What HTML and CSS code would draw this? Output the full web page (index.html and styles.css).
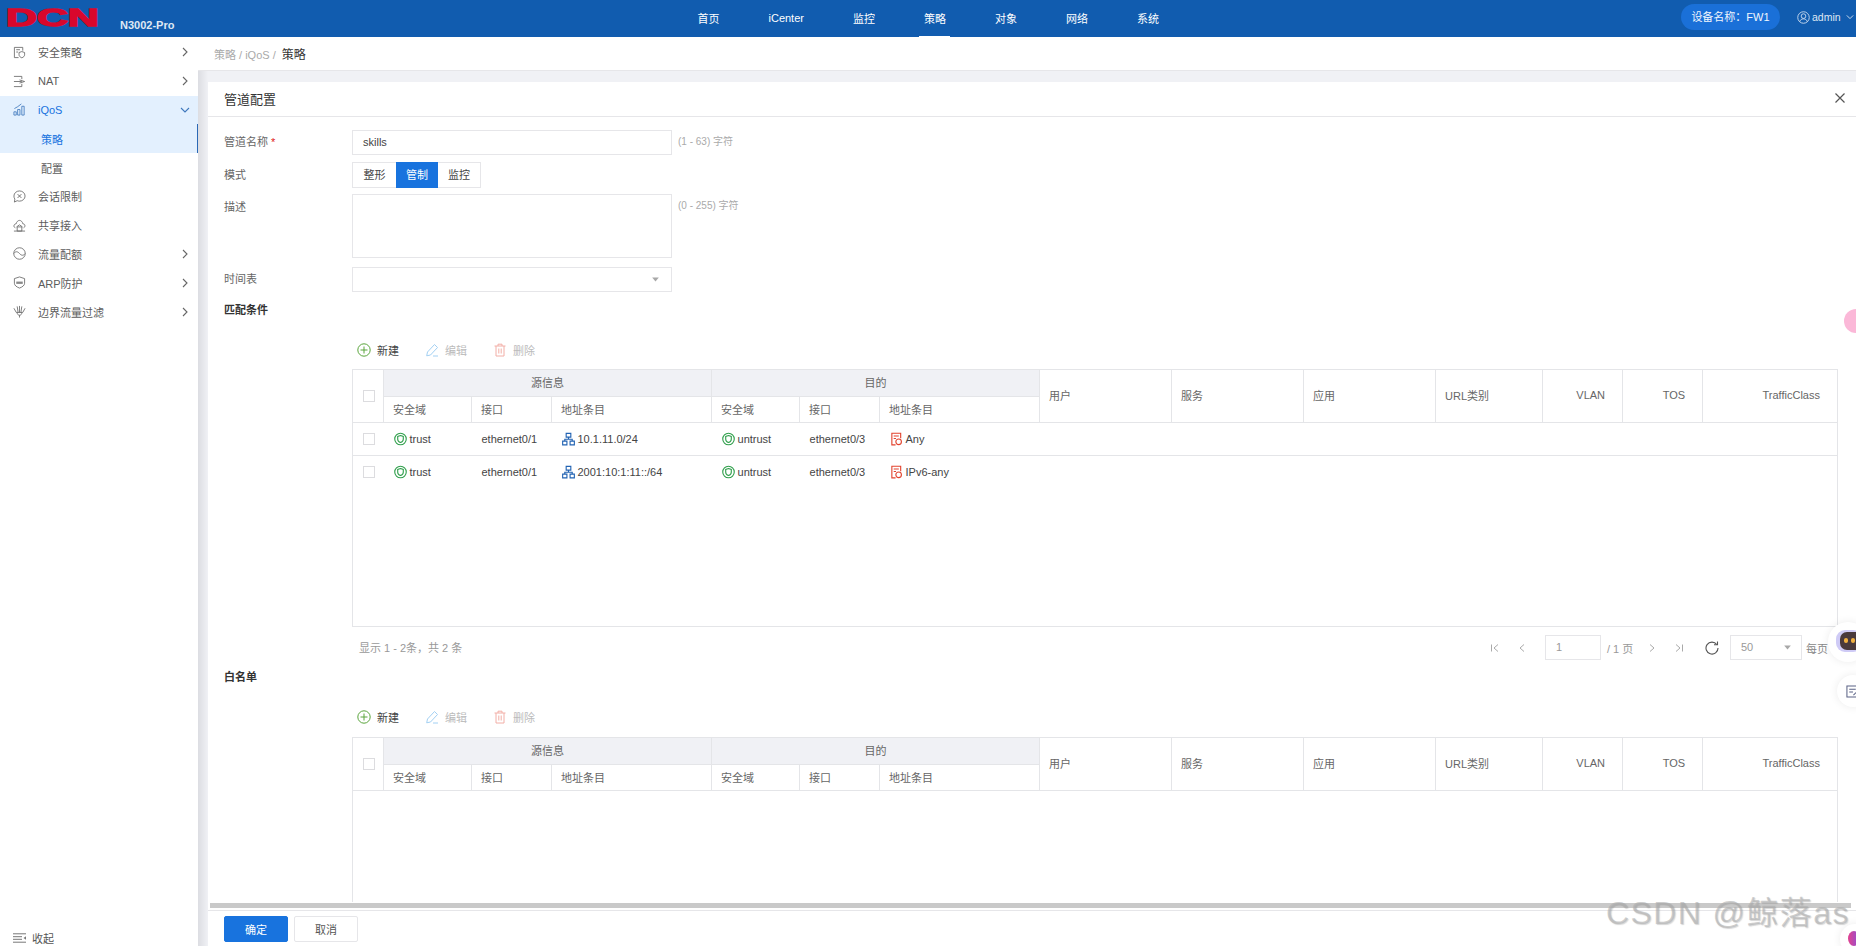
FILE: index.html
```html
<!DOCTYPE html>
<html lang="zh">
<head>
<meta charset="utf-8">
<title>管道配置</title>
<link rel="stylesheet" href="styles.css">
</head>
<body>
<svg class="defs" width="0" height="0">
  <symbol id="i-chev-r" viewBox="0 0 10 10"><path d="M3 1l4 4-4 4" fill="none" stroke="currentColor" stroke-width="1.1"/></symbol>
  <symbol id="i-chev-d" viewBox="0 0 10 10"><path d="M1 3l4 4 4-4" fill="none" stroke="currentColor" stroke-width="1.1"/></symbol>
  <symbol id="i-zone" viewBox="0 0 14 14"><circle cx="7" cy="7" r="6.200" fill="none" stroke="#2f9f4b" stroke-width="1.200"/><path d="M7 3.200l3 1.100v2.900c0 1.800-1.400 3-3 3.600-1.600-.6-3-1.800-3-3.600V4.300z" fill="none" stroke="#2f9f4b" stroke-width="1.200"/></symbol>
  <symbol id="i-net" viewBox="0 0 14 14"><path d="M4.500 1h5v4h-5zM.7 9.300h4.600v4H.7zM8.700 9.300h4.600v4H8.700zM7 5v2.200M3 9.300V7.200h8v2.100" fill="none" stroke="#2263b3" stroke-width="1.200"/></symbol>
  <symbol id="i-addr" viewBox="0 0 14 14"><path d="M6 13.300H2V.8h9.500v5.500M4 3.800h5.500M4 6.500h2.500" fill="none" stroke="#e2432e" stroke-width="1.200"/><circle cx="9.300" cy="10" r="3" fill="none" stroke="#e2432e" stroke-width="1.200"/></symbol>
  <symbol id="i-add" viewBox="0 0 14 14"><circle cx="7" cy="7" r="6.200" fill="none" stroke="#5aa53c" stroke-width="1"/><path d="M7 3.500v7M3.500 7h7" stroke="#5aa53c" stroke-width="1"/></symbol>
  <symbol id="i-edit" viewBox="0 0 14 14"><path d="M9.500 1.500l3 3-7 7.500-3.800.8.800-3.800zM8 13h5" fill="none" stroke="#a2d0f3" stroke-width="1"/></symbol>
  <symbol id="i-del" viewBox="0 0 14 14"><path d="M1.500 3h11M5 3V1.200h4V3M3 3v10h8V3M5.800 5.500v5M8.200 5.500v5" fill="none" stroke="#f2aea6" stroke-width="1"/></symbol>
  <symbol id="i-caret" viewBox="0 0 8 6"><path d="M0 .5h8L4 5.500z" fill="#a8a8a8"/></symbol>
</svg>

<div class="app">
  <header class="topbar">
    <div class="brand">
      <span class="logo">DCN</span>
      <span class="model">N3002-Pro</span>
    </div>
    <nav class="nav">
      <a class="nav-item">首页</a>
      <a class="nav-item">iCenter</a>
      <a class="nav-item">监控</a>
      <a class="nav-item is-active">策略</a>
      <a class="nav-item">对象</a>
      <a class="nav-item">网络</a>
      <a class="nav-item">系统</a>
    </nav>
    <div class="top-right">
      <span class="device-pill">设备名称：FW1</span>
      <span class="user">
        <svg class="user-icon" viewBox="0 0 14 14"><circle cx="7" cy="7" r="6.200" fill="none" stroke="#dbe6f4" stroke-width=".9"/><circle cx="7" cy="5.500" r="2.500" fill="none" stroke="#dbe6f4" stroke-width=".9"/><path d="M2.800 11.500c.8-2 2.300-3 4.200-3s3.400 1 4.200 3" fill="none" stroke="#dbe6f4" stroke-width=".9"/></svg>
        admin
        <svg class="user-chev"><use href="#i-chev-d"/></svg>
      </span>
    </div>
  </header>

  <div class="workspace">
    <aside class="sidebar">
      <div class="side-row">
        <svg class="side-icon" viewBox="0 0 14 14"><path d="M6 12.500H1.500v-11h9V5M3.500 4h4M3.500 6.500h2M9.500 6l3 1v2.500c0 1.500-1.300 2.600-3 3.200-1.700-.6-3-1.700-3-3.200V7z" fill="none" stroke="#666" stroke-width=".9"/></svg>
        <span class="side-text">安全策略</span><svg class="side-chev"><use href="#i-chev-r"/></svg>
      </div>
      <div class="side-row">
        <svg class="side-icon" viewBox="0 0 14 14"><path d="M1 1.500h8.500v3M1 7h8.500M1 12.500h8.500v-3M7 5.300L12.500 7 7 8.700" fill="none" stroke="#666" stroke-width=".9"/></svg>
        <span class="side-text">NAT</span><svg class="side-chev"><use href="#i-chev-r"/></svg>
      </div>
      <div class="side-row is-open">
        <svg class="side-icon" viewBox="0 0 14 14"><path d="M1 9.500h2.500V13H1zM5 7h2.500v6H5zM9.500 3.500H12V13H9.500zM1.500 6l3.500-2 4-3" fill="none" stroke="#3f78bd" stroke-width=".9"/></svg>
        <span class="side-text">iQoS</span><svg class="side-chev"><use href="#i-chev-d"/></svg>
      </div>
      <div class="side-row side-sub is-current"><span class="side-text">策略</span></div>
      <div class="side-row side-sub"><span class="side-text">配置</span></div>
      <div class="side-row">
        <svg class="side-icon" viewBox="0 0 14 14"><path d="M7 1c3.300 0 6 2.400 6 5.500S10.300 12 7 12c-.9 0-1.800-.2-2.500-.5L1.500 13l.5-3.200C1.400 8.900 1 7.800 1 6.500 1 3.400 3.700 1 7 1z" fill="none" stroke="#666" stroke-width=".9"/><path d="M5 4.500l4 4M9 4.500l-4 4" stroke="#666" stroke-width="1"/></svg>
        <span class="side-text">会话限制</span>
      </div>
      <div class="side-row">
        <svg class="side-icon" viewBox="0 0 14 14"><path d="M2.500 9.500C1.200 9 .7 7.800 1.200 6.600c.4-1 1.300-1.400 2.100-1.300C3.800 3 5.400 1.500 7 1.500s3.200 1.500 3.700 3.800c1-.1 1.900.4 2.100 1.400.2 1.200-.3 2.300-1.300 2.800M1 13h12M4.500 8.500h5V13h-5zM3.800 8.500L7 6.300l3.200 2.200" fill="none" stroke="#666" stroke-width=".9"/></svg>
        <span class="side-text">共享接入</span>
      </div>
      <div class="side-row">
        <svg class="side-icon" viewBox="0 0 14 14"><circle cx="7" cy="7" r="6.200" fill="none" stroke="#666" stroke-width=".9"/><path d="M.8 7c2-2.500 4-2.500 6.200 0s4.200 2.500 6.200 0" fill="none" stroke="#666" stroke-width=".9"/></svg>
        <span class="side-text">流量配额</span><svg class="side-chev"><use href="#i-chev-r"/></svg>
      </div>
      <div class="side-row">
        <svg class="side-icon" viewBox="0 0 14 14"><path d="M7 1l5.500 1.800v5c0 2.300-2.300 4-5.500 5.200-3.200-1.200-5.500-2.900-5.500-5.200v-5z" fill="none" stroke="#666" stroke-width=".9"/><path d="M3.500 6h7v2.500h-7z" fill="#888"/></svg>
        <span class="side-text">ARP防护</span><svg class="side-chev"><use href="#i-chev-r"/></svg>
      </div>
      <div class="side-row">
        <svg class="side-icon" viewBox="0 0 14 14"><path d="M1 3.500l2.500 4.500h7L13 3.500M4.500 1.500L5.500 8M9.500 1.500L8.500 8M7 1v7M4.500 8c0 2 1 3 2.500 3s2.500-1 2.500-3M7 11v2.500" fill="none" stroke="#666" stroke-width=".9"/></svg>
        <span class="side-text">边界流量过滤</span><svg class="side-chev"><use href="#i-chev-r"/></svg>
      </div>
      <div class="collapse">
        <svg class="collapse-icon" viewBox="0 0 13 10"><path d="M0 .800h13M0 3.700h9M0 6.300h9M0 9.200h13" stroke="#777" stroke-width="1"/><path d="M13 3.200v3.600L10.500 5z" fill="#777"/></svg>
        <span>收起</span>
      </div>
    </aside>
    <div class="gutter"></div>

    <main class="main">
      <div class="crumbs"><span class="crumb-dim">策略 / iQoS / </span><span class="crumb-cur">策略</span></div>
      <section class="panel">
        <div class="panel-head">
          <h1 class="panel-title">管道配置</h1>
          <svg class="close" viewBox="0 0 10 10"><path d="M.500.500l9 9M9.500.500l-9 9" stroke="#555" stroke-width="1.200"/></svg>
        </div>
        <div class="panel-body">
          <div class="form-row row-name">
            <label class="form-label">管道名称 <em class="req">*</em></label>
            <div class="field">skills</div>
            <span class="hint">(1 - 63) 字符</span>
          </div>
          <div class="form-row row-mode">
            <label class="form-label">模式</label>
            <div class="seg">
              <span class="seg-item seg-a">整形</span>
              <span class="seg-item seg-b is-on">管制</span>
              <span class="seg-item seg-c">监控</span>
            </div>
          </div>
          <div class="form-row row-desc">
            <label class="form-label">描述</label>
            <div class="field field-area"></div>
            <span class="hint">(0 - 255) 字符</span>
          </div>
          <div class="form-row row-time">
            <label class="form-label">时间表</label>
            <div class="field field-select"><svg class="caret"><use href="#i-caret"/></svg></div>
          </div>

          <h2 class="section-title">匹配条件</h2>
          <div class="toolbar toolbar-first">
            <span class="tool tool-new"><svg class="tool-icon"><use href="#i-add"/></svg>新建</span>
            <span class="tool tool-off tool-edit"><svg class="tool-icon"><use href="#i-edit"/></svg>编辑</span>
            <span class="tool tool-off tool-del"><svg class="tool-icon"><use href="#i-del"/></svg>删除</span>
          </div>
          <div class="grid-wrap">
            <table class="grid">
              <colgroup>
                <col class="c-chk"><col class="c-zone"><col class="c-if"><col class="c-addr"><col class="c-zone"><col class="c-if"><col class="c-addr"><col class="c-wide"><col class="c-wide"><col class="c-wide"><col class="c-url"><col class="c-num"><col class="c-num"><col>
              </colgroup>
              <thead>
                <tr class="h1">
                  <th rowspan="2"><span class="chk"></span></th>
                  <th colspan="3" class="center">源信息</th>
                  <th colspan="3" class="center">目的</th>
                  <th rowspan="2" class="plain">用户</th><th rowspan="2" class="plain">服务</th><th rowspan="2" class="plain">应用</th><th rowspan="2" class="plain">URL类别</th>
                  <th rowspan="2" class="plain right">VLAN</th><th rowspan="2" class="plain right">TOS</th><th rowspan="2" class="plain right">TrafficClass</th>
                </tr>
                <tr class="h2"><th>安全域</th><th>接口</th><th>地址条目</th><th>安全域</th><th>接口</th><th>地址条目</th></tr>
              </thead>
              <tbody>
                <tr class="row-line">
                  <td><span class="chk"></span></td>
                  <td><svg class="cell-icon"><use href="#i-zone"/></svg>trust</td><td>ethernet0/1</td>
                  <td><svg class="cell-icon"><use href="#i-net"/></svg>10.1.11.0/24</td>
                  <td><svg class="cell-icon"><use href="#i-zone"/></svg>untrust</td><td>ethernet0/3</td>
                  <td><svg class="cell-icon"><use href="#i-addr"/></svg>Any</td>
                  <td colspan="7"></td>
                </tr>
                <tr>
                  <td><span class="chk"></span></td>
                  <td><svg class="cell-icon"><use href="#i-zone"/></svg>trust</td><td>ethernet0/1</td>
                  <td><svg class="cell-icon"><use href="#i-net"/></svg>2001:10:1:11::/64</td>
                  <td><svg class="cell-icon"><use href="#i-zone"/></svg>untrust</td><td>ethernet0/3</td>
                  <td><svg class="cell-icon"><use href="#i-addr"/></svg>IPv6-any</td>
                  <td colspan="7"></td>
                </tr>
              </tbody>
            </table>
          </div>
          <div class="pager">
            <span class="pager-info">显示 1 - 2条，共 2 条</span>
            <div class="pager-ctrl">
              <svg class="pg-btn pg-first" viewBox="0 0 10 10"><path d="M1.500 1.500v7M8 1.500L4 5l4 3.500" fill="none" stroke="#aaa"/></svg>
              <svg class="pg-btn pg-prev" viewBox="0 0 10 10"><path d="M7 1.500L3 5l4 3.500" fill="none" stroke="#aaa"/></svg>
              <span class="pg-input">1</span>
              <span class="pg-total">/ 1 页</span>
              <svg class="pg-btn pg-next" viewBox="0 0 10 10"><path d="M3 1.500L7 5 3 8.500" fill="none" stroke="#aaa"/></svg>
              <svg class="pg-btn pg-last" viewBox="0 0 10 10"><path d="M8.500 1.500v7M2 1.500L6 5 2 8.500" fill="none" stroke="#aaa"/></svg>
              <svg class="pg-refresh" viewBox="0 0 14 14"><path d="M11.800 3.500A6 6 0 1 0 13 7" fill="none" stroke="#555" stroke-width="1.100"/><path d="M9 3.800h3.500V.500" fill="none" stroke="#555" stroke-width="1.100"/></svg>
              <span class="pg-size">50<svg class="caret"><use href="#i-caret"/></svg></span>
              <span class="pg-unit">每页</span>
            </div>
          </div>

          <h2 class="section-title section-second">白名单</h2>
          <div class="toolbar">
            <span class="tool tool-new"><svg class="tool-icon"><use href="#i-add"/></svg>新建</span>
            <span class="tool tool-off tool-edit"><svg class="tool-icon"><use href="#i-edit"/></svg>编辑</span>
            <span class="tool tool-off tool-del"><svg class="tool-icon"><use href="#i-del"/></svg>删除</span>
          </div>
          <div class="grid-wrap">
            <table class="grid">
              <colgroup>
                <col class="c-chk"><col class="c-zone"><col class="c-if"><col class="c-addr"><col class="c-zone"><col class="c-if"><col class="c-addr"><col class="c-wide"><col class="c-wide"><col class="c-wide"><col class="c-url"><col class="c-num"><col class="c-num"><col>
              </colgroup>
              <thead>
                <tr class="h1">
                  <th rowspan="2"><span class="chk"></span></th>
                  <th colspan="3" class="center">源信息</th>
                  <th colspan="3" class="center">目的</th>
                  <th rowspan="2" class="plain">用户</th><th rowspan="2" class="plain">服务</th><th rowspan="2" class="plain">应用</th><th rowspan="2" class="plain">URL类别</th>
                  <th rowspan="2" class="plain right">VLAN</th><th rowspan="2" class="plain right">TOS</th><th rowspan="2" class="plain right">TrafficClass</th>
                </tr>
                <tr class="h2"><th>安全域</th><th>接口</th><th>地址条目</th><th>安全域</th><th>接口</th><th>地址条目</th></tr>
              </thead>
            </table>
          </div>
        </div>
        <div class="hscroll"><div class="hscroll-thumb"></div></div>
        <div class="panel-foot">
          <button class="btn btn-primary" type="button">确定</button>
          <button class="btn" type="button">取消</button>
        </div>
      </section>
    </main>
  </div>

  <div class="float-pink"></div>
  <div class="float-robot"><span class="robot-face"><i></i><i></i></span></div>
  <div class="float-note"><svg class="note-icon" viewBox="0 0 14 14"><path d="M13 1H1v12h12M3.500 4.500h7M3.500 7.500h4M8 11l4-4" fill="none" stroke="#5a6285" stroke-width="1.100"/></svg></div>
  <div class="float-color"></div>
  <div class="watermark">CSDN @鲸落as</div>
</div>
</body>
</html>
```

FILE: styles.css
```css
* { box-sizing: border-box; }
html, body { margin: 0; height: 100%; overflow: hidden; }
body {
  font-family: "Liberation Sans", "Noto Sans CJK SC", sans-serif;
  font-size: 11px;
  color: #555;
  background: #fff;
}
.defs { position: absolute; }
.app { position: relative; display: flex; flex-direction: column; width: 1856px; height: 946px; overflow: hidden; }

/* top bar */
.topbar { flex: none; height: 37px; background: #115caf; color: #fff; display: flex; align-items: stretch; position: relative; }
.brand { width: 640px; position: relative; flex: none; }
.logo {
  position: absolute; left: 6px; top: 6px; width: 90px; height: 24px; line-height: 24px;
  font-size: 23px; font-weight: 700; color: #d8072c; -webkit-text-stroke: 1.4px #d8072c;
  letter-spacing: 0; transform-origin: left center; transform: scaleX(1.86);
}
.model { position: absolute; left: 120px; top: 19px; font-size: 11px; line-height: 13px; font-weight: 700; color: #dfe8f4; }
.nav { display: flex; margin-left: 33px; }
.nav-item { padding: 0 24.5px 2px; display: flex; align-items: center; justify-content: center; font-size: 11px; color: #fff; position: relative; }
.nav-item.is-active::after { content: ""; position: absolute; left: 20px; right: 20px; bottom: 0; height: 1px; background: #fff; }
.top-right { margin-left: auto; display: flex; align-items: center; padding-right: 3px; }
.device-pill { height: 26px; width: 99px; border-radius: 13px; background: #1a70d8; font-size: 11px; line-height: 26px; text-align: center; color: #f1f6fd; margin-bottom: 3px; }
.user { display: flex; align-items: center; margin-left: 17px; width: 56px; color: #dfe8f4; font-size: 10.5px; margin-bottom: 3px; }
.user-icon { width: 13px; height: 13px; margin-right: 2px; flex: none; }
.user-chev { width: 8px; height: 8px; margin-left: 5px; color: #dfe8f4; flex: none; }

.workspace { flex: 1; display: flex; min-height: 0; }

/* side menu */
.sidebar { width: 198px; flex: none; background: #fff; display: flex; flex-direction: column; padding-top: 1px; }
.side-row { height: 28.8px; flex: none; display: flex; align-items: center; padding-left: 13px; color: #5c5c5c; font-size: 11px; position: relative; }
.side-icon { width: 13px; height: 13px; margin-right: 12px; flex: none; }
.side-chev { width: 10px; height: 10px; margin-left: auto; margin-right: 8px; color: #666; flex: none; }
.side-row.is-open { background: #e3f0fe; color: #1873de; }
.side-row.is-open .side-chev { color: #3f78bd; }
.side-sub { padding-left: 41px; }
.side-sub.is-current { background: #e3f0fe; color: #1873de; border-right: 1px solid #2b68b5; }
.collapse { margin-top: auto; display: flex; align-items: center; height: 14px; padding-left: 13px; margin-bottom: 1px; color: #555; }
.collapse-icon { width: 13px; height: 10px; margin-right: 6px; }

.gutter { width: 10px; flex: none; background: linear-gradient(90deg, #dcdde2, #f0f1f5); }

/* main column */
.main { flex: 1; min-width: 0; display: flex; flex-direction: column; background: #f0f1f5; }
.crumbs { flex: none; height: 34px; margin-left: -10px; padding-left: 16px; background: #fff; border-bottom: 1px solid #e6e6e9; display: flex; align-items: center; gap: 3px; position: relative; }
.crumb-dim { color: #aaa; font-size: 11px; white-space: pre; }
.crumb-cur { color: #333; font-size: 12px; }
.panel { flex: 1; min-height: 0; margin-top: 11px; background: #fff; display: flex; flex-direction: column; }
.panel-head { flex: none; height: 35px; padding: 0 11px 2px 16px; border-bottom: 1px solid #e6e6e9; display: flex; align-items: center; justify-content: space-between; }
.panel-title { margin: 0; font-size: 13px; font-weight: 400; color: #333; }
.close { width: 10px; height: 10px; }

.panel-body { flex: 1; min-height: 0; overflow: hidden; padding: 13px 18px 0 16px; }
.form-row { display: flex; align-items: flex-start; }
.form-label { width: 128px; flex: none; line-height: 25px; color: #666; }
.row-mode .form-label, .row-desc .form-label { padding-top: 1px; }
.req { color: #e02020; font-style: normal; }
.field { width: 320px; height: 25px; border: 1px solid #e6e6e9; line-height: 22px; padding-left: 10px; color: #444; position: relative; }
.field-area { height: 64px; }
.field-select .caret { position: absolute; right: 12px; top: 9px; width: 7px; height: 5px; }
.hint { margin-left: 6px; line-height: 23px; color: #aaa; font-size: 10px; }
.row-mode { margin-top: 7px; }
.row-desc { margin-top: 6px; }
.row-time { margin-top: 9px; }
.seg { display: flex; height: 26px; border: 1px solid #e6e6e9; line-height: 24px; color: #444; }
.seg-item { text-align: center; }
.seg-a { width: 43px; }
.seg-b { width: 42px; background: #1873de; color: #fff; height: 26px; margin-top: -1px; line-height: 26px; }
.seg-c { width: 42px; }

.section-title { margin: 10px 0 0; font-size: 11px; line-height: 16px; font-weight: 700; color: #333; }
.section-second { margin-top: 9px; }
.toolbar { margin: 20px 0 8px 128px; height: 24px; padding-bottom: 1px; display: flex; align-items: center; position: relative; color: #444; }
.toolbar-first { margin-bottom: 7px; }
.tool { display: flex; align-items: center; }
.tool-off { color: #bbb; }
.tool-icon { width: 14px; height: 14px; margin-right: 6px; flex: none; }
.tool-new { margin-left: 5px; width: 68px; }
.tool-edit { width: 68px; }

.grid-wrap { margin-left: 128px; width: 1486px; height: 258px; border: 1px solid #e4e5e8; border-top: 0; border-bottom-color: #e4e5e8; }
.panel-body .grid-wrap:last-child { height: 300px; border-bottom: 0; }
.grid { width: 1486px; margin-left: -1px; table-layout: fixed; border-collapse: collapse; }
.c-chk { width: 31px; }
.c-zone { width: 88px; }
.c-if { width: 80px; }
.c-addr { width: 160px; }
.c-wide { width: 132px; }
.c-url { width: 107px; }
.c-num { width: 80px; }
.grid th { font-weight: 400; color: #666; text-align: left; padding: 0 9px 2px; border: 1px solid #e4e5e8; }
.h1 th { height: 27px; background: #f0f1f5; }
.h1 th.plain { background: #fff; }
.h1 th:first-child { background: #fff; padding: 0 0 0 10px; }
.h2 th { height: 26px; background: #fff; }
.grid th.center { text-align: center; }
.grid th.right { text-align: right; padding-right: 17px; }
.grid td { height: 33px; padding: 0 10px 1px; color: #444; white-space: nowrap; }
.grid td:first-child { padding-right: 0; }
.row-line td { border-bottom: 1px solid #e4e5e8; }
.chk { display: block; width: 12px; height: 12px; border: 1px solid #dcdcdf; background: #fff; }
.cell-icon { width: 13px; height: 14px; margin-right: 3px; vertical-align: -3px; }

.pager { height: 25px; margin: 8px 0 0 128px; width: 1486px; display: flex; align-items: center; justify-content: space-between; color: #aaa; }
.pager-info { margin-left: 7px; padding-bottom: 2px; color: #999; }
.pager-ctrl { display: flex; align-items: center; height: 25px; margin-right: 10px; }
.pg-btn { width: 10px; height: 10px; flex: none; }
.pg-prev { margin-left: 17px; }
.pg-input { width: 56px; height: 25px; line-height: 23px; border: 1px solid #e6e6e9; padding-left: 10px; margin-left: 18px; color: #999; }
.pg-total { margin-left: 6px; color: #999; width: 28px; }
.pg-next { margin-left: 12px; }
.pg-last { margin-left: 17px; }
.pg-refresh { width: 14px; height: 14px; margin-left: 21px; flex: none; }
.pg-size { width: 72px; height: 25px; line-height: 23px; border: 1px solid #e6e6e9; padding-left: 10px; margin-left: 11px; position: relative; color: #999; }
.pg-size .caret { position: absolute; right: 10px; top: 9px; width: 7px; height: 5px; }
.pg-unit { margin-left: 4px; color: #888; }

.hscroll { flex: none; height: 9px; padding: 1px 5px 0 2px; border-bottom: 1px solid #e6e6e9; }
.hscroll-thumb { height: 5px; background: #c9c9c9; }
.panel-foot { flex: none; height: 35px; padding: 5px 0 0 16px; display: flex; gap: 6px; align-items: flex-start; }
.btn { width: 64px; height: 26px; border: 1px solid #e6e6e9; border-radius: 2px; background: #fff; font: inherit; color: #555; padding: 0; }
.btn-primary { background: #1873de; border-color: #1873de; color: #fff; }

/* floating items that lie over the page */
.float-pink { position: absolute; right: 0; top: 309px; width: 12px; height: 24px; border-radius: 12px 0 0 12px; background: #fbb8d8; }
.float-robot { position: absolute; left: 1828px; top: 622px; width: 40px; height: 40px; border-radius: 50%; background: #fff; box-shadow: 0 0 8px rgba(0,0,0,.08); }
.robot-face { position: absolute; left: 12px; top: 10px; width: 22px; height: 18px; border-radius: 7px; background: #4a3a3c; box-shadow: -2px 0 0 2px #cfcbf6; display: flex; gap: 3px; padding: 6px 0 0 4px; }
.robot-face i { width: 4px; height: 5px; border-radius: 2px; background: #f0b040; }
.float-note { position: absolute; left: 1837px; top: 675px; width: 32px; height: 32px; border-radius: 50%; background: #fff; box-shadow: 0 0 8px rgba(0,0,0,.08); }
.note-icon { position: absolute; left: 9px; top: 10px; width: 13px; height: 13px; }
.float-color { position: absolute; left: 1840px; top: 924px; width: 30px; height: 30px; border-radius: 50%; background: #fff; box-shadow: 0 0 8px rgba(0,0,0,.08); }
.float-color::after { content: ""; position: absolute; left: 8px; top: 7px; width: 12px; height: 15px; border-radius: 50%; background: linear-gradient(90deg, #e2438f, #8a4fd8); }
.watermark { position: absolute; left: 1606px; top: 894px; font-size: 32px; line-height: 38px; letter-spacing: 1.4px; color: rgba(175,175,175,.6); text-shadow: 1px 1px 1px rgba(120,120,120,.3); white-space: nowrap; pointer-events: none; }
```
